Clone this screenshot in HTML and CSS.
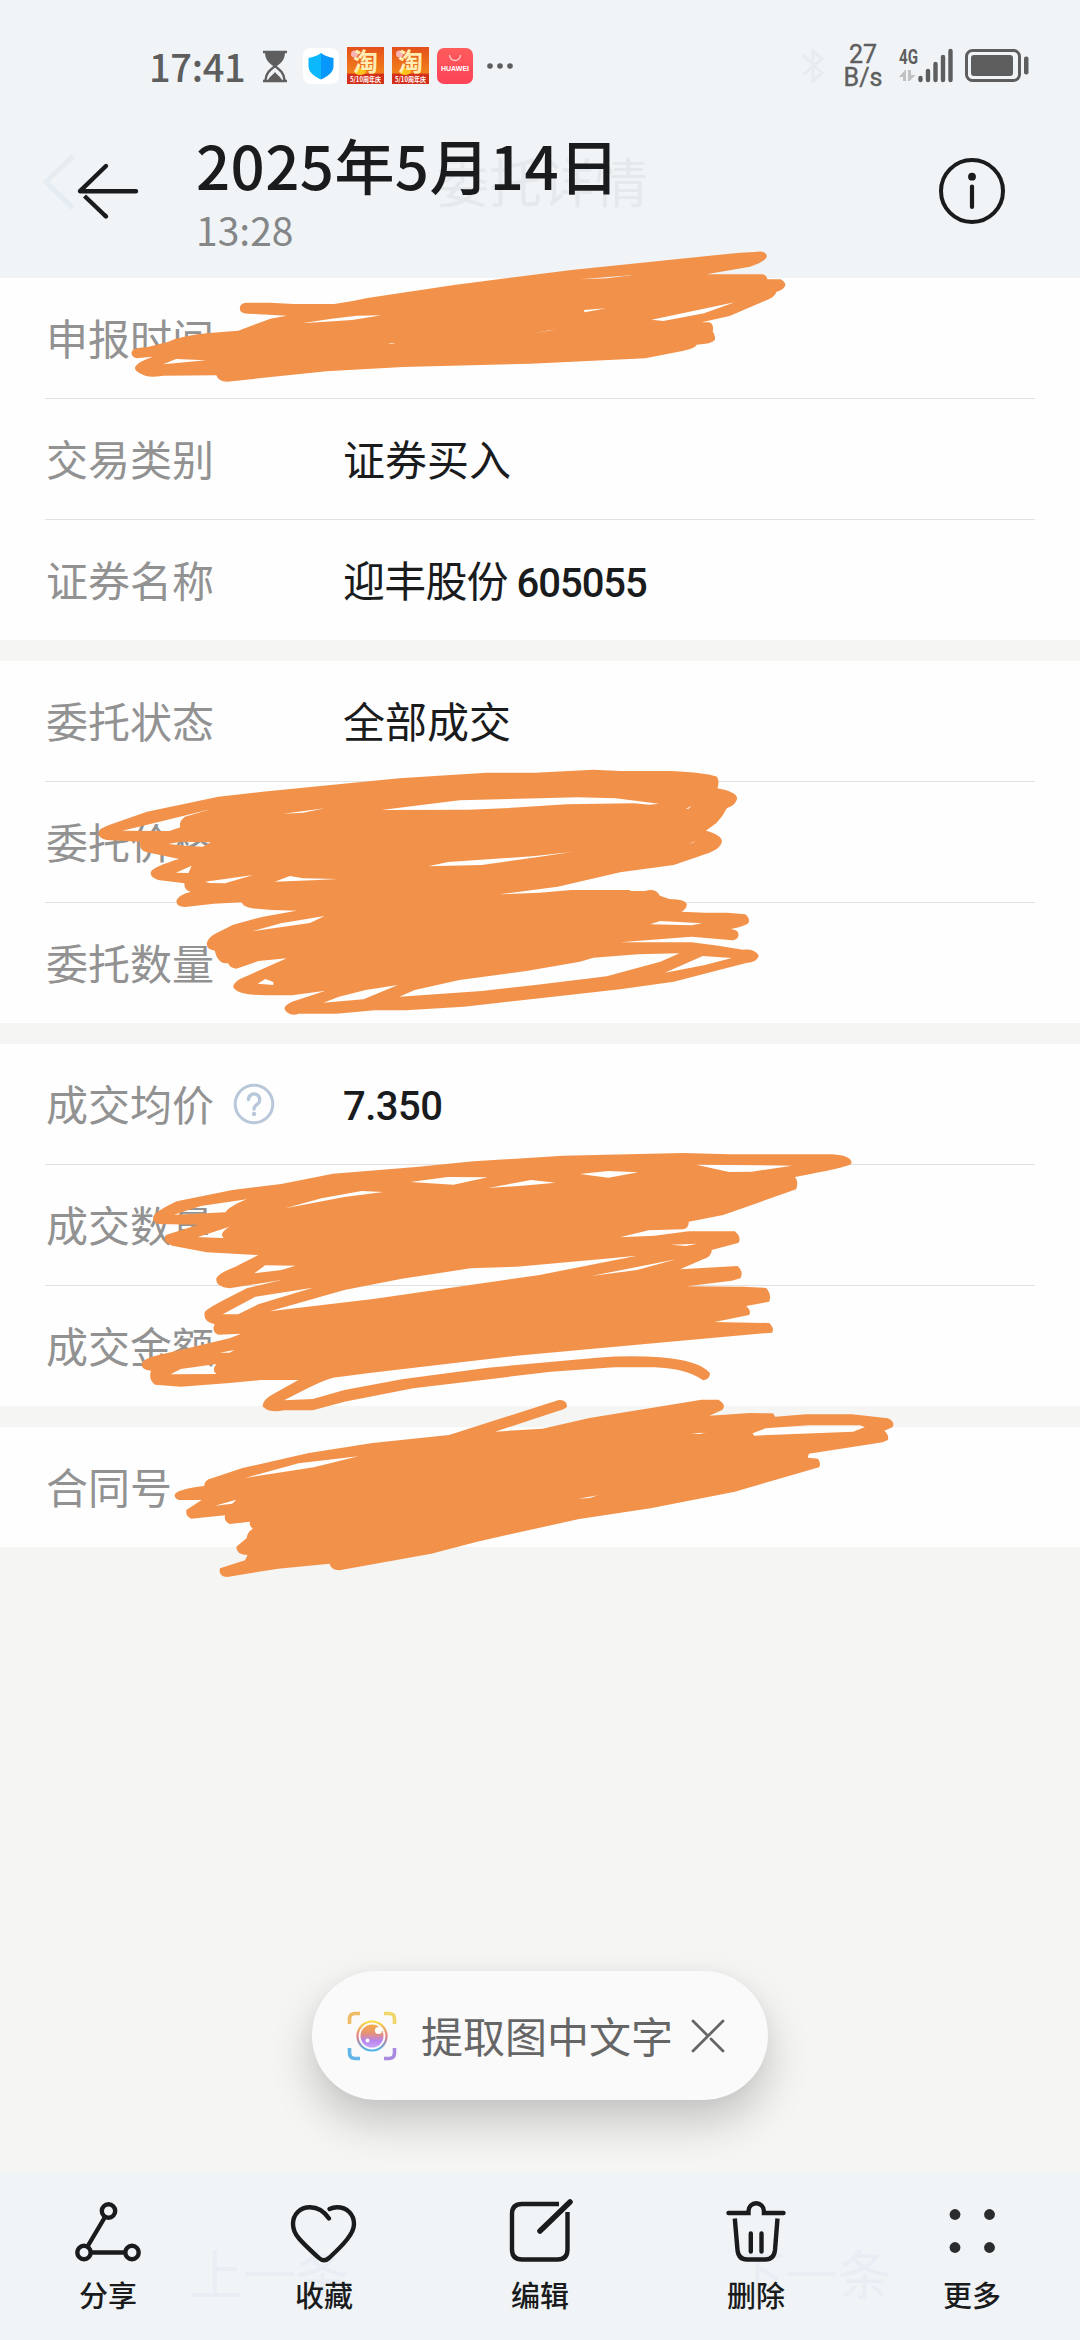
FILE: index.html
```html
<!DOCTYPE html>
<html lang="zh-CN">
<head>
    <meta charset="UTF-8">
    <meta name="viewport" content="width=device-width, initial-scale=1.0">
    <title>2025年5月14日</title>
    <link rel="stylesheet" href="styles.css">
</head>
<body>
    <div class="header">
        <div class="status-bar">
            <span class="clock">17:41</span>
            <svg class="hourglass" width="26" height="34" viewBox="0 0 26 34">
                <path d="M1 3h24M1 32h24" stroke="#5e5e5e" stroke-width="2.6"/>
                <path d="M3 3h20c0 8-4 11-9 14.500h-2C7 14 3 11 3 3z" fill="#5e5e5e"/>
                <path d="M13 17c-5 4-9 7-9.500 14M13 17c5 4 9 7 9.500 14" fill="none" stroke="#5e5e5e" stroke-width="2.400"/>
                <path d="M6 31c2-4 5-5 7-8 2 3 5 4 7 8z" fill="#5e5e5e"/>
            </svg>
            <svg class="app" width="36" height="36" viewBox="0 0 36 36">
                <defs>
                    <linearGradient id="shield"><stop offset=".5" stop-color="#0cb8fc"/><stop offset=".5" stop-color="#0898fb"/></linearGradient>
                    <linearGradient id="sale" x2="0" y2="1"><stop stop-color="#e4501a"/><stop offset=".7" stop-color="#f2801c"/><stop offset=".74" stop-color="#d3301c"/></linearGradient>
                </defs>
                <rect width="36" height="36" rx="8" fill="#fff"/>
                <path d="M18 5c4 3 8 4 12.500 5v8c0 6-5 10-12.500 13.500C10.500 28 5.500 24 5.500 18v-8C10 9 14 8 18 5z" fill="url(#shield)"/>
            </svg>
            <svg class="app taobao" width="37" height="37" viewBox="0 0 37 37">
                <rect width="37" height="37" fill="url(#sale)"/>
                <circle cx="7.500" cy="7" r="3.500" fill="#f7b4b4"/>
                <ellipse cx="13" cy="24.500" rx="6" ry="3.500" fill="#ffc21a"/>
                <text x="6" y="24" class="taobao-name" textLength="25" lengthAdjust="spacingAndGlyphs">淘</text>
                <text x="3" y="35" class="taobao-tag" textLength="31" lengthAdjust="spacingAndGlyphs">5/10周年庆</text>
            </svg>
            <svg class="app taobao" width="37" height="37" viewBox="0 0 37 37">
                <rect width="37" height="37" fill="url(#sale)"/>
                <circle cx="7.500" cy="7" r="3.500" fill="#f7b4b4"/>
                <ellipse cx="13" cy="24.500" rx="6" ry="3.500" fill="#ffc21a"/>
                <text x="6" y="24" class="taobao-name" textLength="25" lengthAdjust="spacingAndGlyphs">淘</text>
                <text x="3" y="35" class="taobao-tag" textLength="31" lengthAdjust="spacingAndGlyphs">5/10周年庆</text>
            </svg>
            <div class="app huawei">
                <svg width="14" height="8" viewBox="0 0 14 8"><path d="M1.500 1a5.500 5.500 0 0 0 11 0" fill="none" stroke="#ffc4c4" stroke-width="1.400"/></svg>
                <span>HUAWEI</span>
            </div>
            <svg class="dots" width="28" height="8" viewBox="0 0 28 8" fill="#5e5e5e">
                <circle cx="4" cy="4" r="2.800"/><circle cx="14" cy="4" r="2.800"/><circle cx="24" cy="4" r="2.800"/>
            </svg>
            <svg class="bluetooth" width="24" height="36" viewBox="0 0 24 36">
                <path d="M2 7l19 18-9 8V3l9 8L2 27" fill="none" stroke="#e8ecef" stroke-width="3"/>
            </svg>
            <div class="speed"><span>27</span><span>B/s</span></div>
            <svg class="signal" width="54" height="36" viewBox="0 0 54 36">
                <text x="0" y="16" class="network" textLength="19" lengthAdjust="spacingAndGlyphs">4G</text>
                <path d="M0 29l6-7h1v11H4v-4zM16.500 27l-6 6H9V22h3v5z" fill="#bfc1c3"/>
                <path d="M21.500 30v2M29 23v9M36.500 16v16M44 9v23M51.500 3v29" stroke="#5e5e5e" stroke-width="4.400" stroke-linecap="round"/>
            </svg>
            <svg class="battery" width="64" height="36" viewBox="0 0 64 36">
                <rect x="1.500" y="2.500" width="53" height="30" rx="6" fill="none" stroke="#5e5e5e" stroke-width="3"/>
                <rect x="6" y="7" width="42" height="21" rx="3" fill="#5e5e5e"/>
                <rect x="59" y="8.500" width="4.500" height="18" rx="2" fill="#5e5e5e"/>
            </svg>
        </div>
        <svg class="ghost ghost-back" width="34" height="58" viewBox="0 0 34 58"><path d="M30 3L3 29l27 26" fill="none" stroke="#e6edf2" stroke-width="5"/></svg>
        <div class="ghost ghost-title">委托详情</div>
        <div class="title-bar">
            <svg width="64" height="58" viewBox="0 0 64 58" fill="none" stroke="#1a1b1c" stroke-width="4.400" stroke-linecap="round" stroke-linejoin="round">
                <path d="M30 4L4 29.200h56"/>
                <path d="M8.500 34L30 54.500" stroke-linecap="butt"/>
                <path d="M29 53.500l1 1"/>
            </svg>
            <div class="title-text">
                <h1>2025年5月14日</h1>
                <p>13:28</p>
            </div>
            <svg width="68" height="68" viewBox="0 0 68 68">
                <circle cx="34" cy="34" r="31" fill="none" stroke="#1a1b1c" stroke-width="4"/>
                <circle cx="34" cy="19.700" r="3.900" fill="#1a1b1c"/>
                <path d="M34 29.500v20.500" stroke="#1a1b1c" stroke-width="4.200" stroke-linecap="round"/>
            </svg>
        </div>
    </div>

    <div class="details">
        <div class="group">
            <div class="row"><span class="label">申报时间</span></div>
            <div class="row"><span class="label">交易类别</span><span class="value">证券买入</span></div>
            <div class="row"><span class="label">证券名称</span><span class="value stock">迎丰股份 <span class="num">605055</span></span></div>
        </div>
        <div class="group">
            <div class="row"><span class="label">委托状态</span><span class="value">全部成交</span></div>
            <div class="row"><span class="label">委托价格</span></div>
            <div class="row"><span class="label">委托数量</span></div>
        </div>
        <div class="group">
            <div class="row">
                <span class="label">成交均价
                    <svg class="help" width="42" height="42" viewBox="0 0 42 42" fill="none" stroke="#b8c7da">
                        <circle cx="21" cy="21" r="18.800" stroke-width="3"/>
                        <path d="M15.500 16.500a5.600 5.600 0 1 1 9 4.500c-2.300 1.700-3.500 2.500-3.500 5" stroke-width="3.400" stroke-linecap="round"/>
                        <circle cx="21" cy="31" r="2.200" fill="#b8c7da" stroke="none"/>
                    </svg>
                </span>
                <span class="value num">7.350</span>
            </div>
            <div class="row"><span class="label">成交数量</span></div>
            <div class="row"><span class="label">成交金额</span></div>
        </div>
        <div class="group">
            <div class="row"><span class="label">合同号</span></div>
        </div>
    </div>

    <!-- marker strokes over the private fields -->
    <svg class="marker marker-time" viewBox="0 0 1568 1200" preserveAspectRatio="none">
        <path d="M470 205Q470 188 485 188L530 188 575 192H655Q690 185 720 174L890 135 1120 90 1450 38 1480 36Q1503 30 1503 50 1500 65 1470 80L1385 103H1495Q1503 106 1504 118H1530Q1540 125 1539 138 1535 150 1522 155 1520 170 1500 182L1430 228 1375 247H1390Q1400 252 1397 275 1403 285 1401 300 1395 312 1365 314 1365 325 1330 335L1265 355 1040 371 790 381 640 394 445 425Q428 425 424 406L320 407Q290 415 278 403 262 392 265 380 270 365 300 350L268 355Q256 350 258 335 262 322 290 321L330 305Q360 285 410 279L467 272 530 236 562 227 485 221Q470 221 470 205Z
            M592 250L650 236 700 227 748 226 690 240ZM1277 239L1440 187 1380 220 1300 243ZM1138 118L1240 105 1190 115ZM1144 210L1188 205 1146 217ZM320 373L345 357 404 361ZM1040 281L1092 267 1070 274ZM760 310L775 310 768 312Z"/>
    </svg>
    <svg class="marker marker-order" viewBox="0 0 1568 900" preserveAspectRatio="none">
        <path d="M41 280Q41 265 70 253L150 215 310 170 420 154 715 115 910 98H1020L1150 89 1210 93H1325Q1400 98 1427 110 1433 125 1428 145 1470 155 1472 175 1470 195 1449 205 1440 230 1425 250L1402 272Q1438 285 1438 305 1435 325 1410 338L1330 375 1210 397 1070 440 940 463 1030 458 1100 450H1230L1235 453H1265Q1290 443 1299 467L1320 477Q1362 478 1359 497 1357 508 1347 515L1400 518H1450L1490 523Q1502 535 1497 550 1488 560 1458 567 1477 570 1475 587 1472 603 1455 600L1370 590 1210 607H1370L1430 617 1485 629Q1510 625 1520 645 1520 665 1490 670L1330 725 1210 748 1050 772 860 800 730 811H660L575 821H490Q475 830 462 815 450 800 475 785L550 752 475 766H415Q350 765 343 740 345 722 370 710L463 655 400 663 350 686Q335 685 332 670 308 672 302 632 280 628 285 605 290 590 305 580L343 554 410 530 485 512 430 510 385 505Q365 500 362 487L300 491 235 501Q215 500 216 482 220 465 248 455 232 450 234 430L175 420Q155 410 159 395 165 380 222 357L150 337Q130 330 135 305L60 300Q42 295 41 280Z
            M95 272L215 233 292 208 235 230Q220 245 225 262L200 273ZM198 312L225 305 293 307 275 320 240 318ZM215 398L250 377 243 399ZM280 425L388 405 325 430 290 429ZM436 425L470 408 500 415 578 417 520 421ZM675 210L850 181 1115 172 1200 175 1297 191 1275 194 1240 190 1090 193 950 205 870 209ZM780 379L825 366 1020 348 1105 335 1030 350 900 375ZM455 221L548 205 500 218ZM385 574L450 550 548 528 515 549ZM398 731L415 717 433 726V735ZM545 788L580 770 640 750 712 735 635 778ZM715 770L750 750 850 720 1000 693 1120 665 1150 653 1250 643 1343 640 1300 665 1180 709 1020 735 900 753ZM1310 698L1395 648 1460 654 1400 675ZM1277 553L1300 543 1393 550 1370 556ZM1357 206L1370 198 1363 206ZM1365 311L1380 303 1372 309Z"/>
    </svg>
    <svg class="marker marker-deal" viewBox="0 0 1568 1200" preserveAspectRatio="none">
        <path d="M267 590Q270 575 308 544L405 510 490 492 580 461 725 441 825 424 980 407 1190 399 1270 403H1450Q1487 408 1483 432 1475 442 1385 471 1392 485 1387 508L1260 585 1200 605Q1200 625 1190 628L1130 631 1080 652 1140 647 1200 634H1280Q1292 650 1287 668L1240 690Q1240 710 1225 718L1185 748 1285 738Q1296 755 1290 775L1275 782 1197 799 1295 800 1335 804Q1345 825 1340 845L1300 858Q1310 875 1305 885L1245 906 1340 909Q1350 925 1345 938L1220 957 900 1007 640 1060 580 1073Q560 1083 530 1110L495 1141 545 1137 600 1110 700 1078 850 1043 1040 1013Q1100 1005 1150 1012 1220 1022 1237 1060 1237 1078 1225 1081 1195 1045 1140 1042H1070L960 1055 720 1105 600 1145 545 1171H495Q470 1180 458 1160 455 1140 480 1118L520 1080H455L400 1089 315 1100 270 1094Q258 1078 263 1052 245 1050 247 1030 252 1012 290 1000L400 955 420 941 380 944Q368 935 374 913 352 905 357 875 362 865 390 840L430 805 490 780 400 805Q375 800 377 775 380 760 410 740L450 705 360 697 300 677Q282 665 289 645L345 614 275 612Q265 605 267 590Z
            M303 584L350 558 430 538Q398 560 393 577ZM344 652L400 620Q380 640 390 654ZM443 760L462 736 515 737 490 750ZM388 883L445 830 545 803 450 853 415 883ZM470 874L600 810 700 776 820 745 900 740 1050 717 1110 707 940 765 650 837ZM1030 768L1178 718 1110 750ZM1168 674L1215 671 1195 678ZM1213 434L1380 437 1310 455 1270 456ZM715 486L780 471 850 472 790 494ZM850 504L925 480 968 488 910 497ZM1010 462L1060 453 1112 457 1060 473ZM497 565L560 535 630 513 668 516 600 531ZM297 1063L315 1047 377 1032Q368 1050 377 1062ZM383 998L408 990 400 998Z"/>
    </svg>
    <svg class="marker marker-contract" viewBox="0 0 1568 660" preserveAspectRatio="none">
        <path d="M107 345Q110 328 165 318 165 300 180 295L240 264 370 219 495 189 645 165 860 60Q877 60 876 80 872 88 860 92L735 155 828 146 920 114 1140 59H1173Q1190 75 1180 90L1155 107 1235 99 1280 100 1284 110 1345 103H1435L1505 115Q1520 125 1514 142L1498 152Q1508 165 1505 180L1495 187 1350 221 1348 233 1368 236Q1375 250 1370 262L1205 335 1040 385 900 417 700 485 610 521 490 554 430 571Q412 568 411 551L310 566 210 591Q192 588 196 565L245 541 250 525Q228 525 228 500L248 475Q250 455 260 447 252 435 255 425L215 432Q203 422 206 406L140 416Q128 410 130 390L160 360H115Q107 355 107 345Z
            M245 294L350 250 467 229 380 262ZM186 377L228 359 220 371ZM1243 167L1240 160 1265 145 1350 136H1450L1460 141 1437 155ZM1120 160L1148 158 1135 162ZM898 356L937 346 920 354Z"/>
    </svg>

    <div class="extract">
        <svg width="50" height="50" viewBox="0 0 50 50" fill="none">
            <defs>
                <linearGradient id="ring" x2="0" y2="1"><stop stop-color="#f7dc3c"/><stop offset=".5" stop-color="#e77b86"/><stop offset="1" stop-color="#4bb4e6"/></linearGradient>
                <linearGradient id="lens" x2="0" y2="1"><stop stop-color="#f5ac45"/><stop offset=".4" stop-color="#e59079"/><stop offset=".7" stop-color="#b884ee"/><stop offset="1" stop-color="#c9a4f7"/></linearGradient>
            </defs>
            <path d="M2.500 13V8q0-5.500 5.500-5.500h5" stroke="#eebb67" stroke-width="3.600"/>
            <path d="M37 2.500h5q5.500 0 5.500 5.500v5" stroke="#efd76c" stroke-width="3.600"/>
            <path d="M2.500 37v5q0 5.500 5.500 5.500h5" stroke="#62b5e6" stroke-width="3.600"/>
            <path d="M37 47.500h5q5.500 0 5.500-5.500v-5" stroke="#a98ae0" stroke-width="3.600"/>
            <circle cx="25" cy="25" r="14.500" stroke="url(#ring)" stroke-width="2.200"/>
            <circle cx="25" cy="25" r="11.500" fill="url(#lens)"/>
            <circle cx="31.500" cy="19.500" r="3.600" fill="#fff"/>
            <circle cx="20.500" cy="29.500" r="2" fill="#fff"/>
        </svg>
        <span>提取图中文字</span>
        <svg width="34" height="34" viewBox="0 0 34 34" stroke="#666" stroke-width="2.800" stroke-linecap="round">
            <path d="M32 2L2 32M2 2l15 15M20 20l12 12"/>
        </svg>
    </div>

    <div class="toolbar">
        <div class="ghost ghost-prev">上一条</div>
        <div class="ghost ghost-next">下一条</div>
        <div class="tool">
            <svg width="72" height="72" viewBox="0 0 72 72">
                <circle cx="36.500" cy="13" r="6.700"/><circle cx="12" cy="54.500" r="6.700"/><circle cx="60" cy="54.500" r="6.700"/>
                <path d="M33 19L15.500 48.500M19 54.500h34"/>
            </svg>
            <span>分享</span>
        </div>
        <div class="tool">
            <svg width="72" height="72" viewBox="0 0 72 72">
                <path d="M41 20.500C36 13 30 9.200 22 9.200 12 9.200 5 16.500 5 26c0 6 2.500 10.500 6 14.500 6 7 13 13 20 19.500q5 4.500 10 0c7-6.500 12-11 18-18.500 4-5 7-9.500 7-15.500 0-9.500-7-16.800-17-16.800q-4 0-7.500 1.800"/>
            </svg>
            <span>收藏</span>
        </div>
        <div class="tool">
            <svg width="72" height="72" viewBox="0 0 72 72">
                <path d="M55 6H18Q8 6 8 16V51.500Q8 61.500 18 61.500H53.500Q63.500 61.500 63.500 51.500V14" stroke-linecap="butt"/>
                <path d="M66 4L36 33" stroke-width="5.500"/>
            </svg>
            <span>编辑</span>
        </div>
        <div class="tool">
            <svg width="72" height="72" viewBox="0 0 72 72">
                <path d="M8.500 15H28.500v-2a7.700 7.700 0 0 1 15.400 0v2H63.500M30.800 35.500V53.500M41.500 35.500V53.500"/>
                <path d="M14.800 20.500L17.500 52Q18.500 61.500 27 61.500H45.500Q54 61.500 55 52L57.500 20.500" stroke-linecap="butt"/>
            </svg>
            <span>删除</span>
        </div>
        <div class="tool">
            <svg class="more" width="72" height="72" viewBox="0 0 72 72">
                <circle cx="19" cy="16.500" r="5.400"/><circle cx="53.500" cy="16.500" r="5.400"/><circle cx="19" cy="49.500" r="5.400"/><circle cx="53.500" cy="49.500" r="5.400"/>
            </svg>
            <span>更多</span>
        </div>
    </div>
</body>
</html>
```

FILE: styles.css
```css
* {
    box-sizing: border-box;
    font-family: "Noto Sans CJK SC", "Noto Sans", sans-serif;
}

body {
    position: relative;
    margin: 0;
    width: 1080px;
    height: 2340px;
    overflow: hidden;
    background-color: #f5f5f4;
    color: #1a1b1c;
    display: flex;
    flex-direction: column;
}

svg {
    flex-shrink: 0;
    display: block;
    overflow: visible;
}

.header {
    position: relative;
    height: 278px;
    background-color: #f0f4f7;
}

.status-bar {
    display: flex;
    align-items: center;
    height: 132px;
    padding: 0 52px 0 149px;
    color: #5e5e5e;
}

.clock {
    width: 113px;
    font-size: 38px;
    font-weight: 500;
    line-height: 40px;
    letter-spacing: -0.3px;
}

.app {
    flex-shrink: 0;
    width: 36px;
    height: 36px;
    margin-left: 9px;
}

.hourglass {
    margin-right: 6px;
}

.taobao {
    width: 37px;
    height: 37px;
    margin-left: 8px;
    margin-top: -1px;
}

.taobao-name {
    font-size: 25px;
    font-weight: 700;
    fill: #ffedb4;
}

.taobao-tag {
    font-size: 7px;
    font-weight: 700;
    fill: #fff;
}

.huawei {
    margin-left: 8px;
    border-radius: 7px;
    background: linear-gradient(#ff5c5c, #fd4358);
    display: flex;
    flex-direction: column;
    align-items: center;
    padding-top: 6px;
}

.huawei span {
    color: #fff;
    font-family: "Liberation Sans", sans-serif;
    font-size: 7px;
    font-weight: 700;
    line-height: 13px;
}

.dots {
    margin-left: 13px;
}

.bluetooth {
    margin-left: auto;
}

.speed {
    display: flex;
    flex-direction: column;
    align-items: center;
    width: 38px;
    margin-left: 19px;
}

.speed span {
    font-family: Roboto, sans-serif;
    font-size: 25px;
    font-weight: 400;
    line-height: 23px;
    -webkit-text-stroke: 0.4px #5e5e5e;
}

.signal {
    margin-left: 17px;
}

.network {
    font-family: Roboto, sans-serif;
    font-size: 21px;
    font-weight: 700;
    fill: #5e5e5e;
}

.battery {
    margin-left: 12px;
    margin-right: -1px;
}

.title-bar {
    position: relative;
    display: flex;
    align-items: center;
    height: 118px;
    padding: 0 74px 0 76px;
}

.title-text {
    flex: 1;
    margin-left: 56px;
    padding-top: 6px;
}

.title-text h1 {
    margin: 0;
    font-size: 60px;
    font-weight: 500;
    line-height: 70px;
    letter-spacing: 0.4px;
    white-space: nowrap;
}

.title-text p {
    margin: 0;
    color: #858687;
    font-size: 39px;
    line-height: 60px;
}

/* faint content of the screen behind the bars */
.ghost {
    position: absolute;
    font-size: 53px;
    line-height: 60px;
    white-space: nowrap;
    color: #e5e9ec;
}

.ghost-back {
    left: 43px;
    top: 153px;
}

.ghost-title {
    left: 436px;
    top: 150px;
}

.ghost-prev {
    left: 190px;
    top: 70px;
    color: #e8eef4;
}

.ghost-next {
    left: 732px;
    top: 70px;
    color: #e8eef4;
}

.details {
    display: flex;
    flex-direction: column;
    gap: 21px;
}

.group {
    background-color: #fefefe;
    padding: 0 45px;
}

.row {
    display: flex;
    align-items: center;
    height: 120px;
    padding-bottom: 4px;
    font-size: 42px;
}

.row + .row {
    height: 121px;
    border-top: 1px solid #e2e2e2;
}

.label {
    display: flex;
    align-items: center;
    width: 298px;
    padding-left: 1px;
    color: #929292;
    white-space: nowrap;
}

.help {
    margin: 3px 0 0 19px;
}

.num {
    font-family: Roboto, sans-serif;
    font-size: 40px;
    font-weight: 500;
    letter-spacing: -1px;
}

.value.num {
    letter-spacing: -0.5px;
    padding-top: 8px;
}

.stock {
    letter-spacing: -0.8px;
}

.marker {
    position: absolute;
    fill: #f2924a;
    fill-rule: evenodd;
}

.marker-time {
    left: 0;
    top: 240px;
    width: 800px;
    height: 400px;
}

.marker-order {
    left: 80px;
    top: 740px;
    width: 700px;
    height: 300px;
}

.marker-deal {
    left: 0;
    top: 1020px;
    width: 900px;
    height: 400px;
}

.marker-contract {
    left: 120px;
    top: 1380px;
    width: 800px;
    height: 220px;
}

.extract {
    position: absolute;
    left: 312px;
    top: 1971px;
    width: 456px;
    height: 129px;
    padding: 0 43px 0 35px;
    border-radius: 65px;
    background-color: #fafafa;
    box-shadow: 0 22px 44px rgba(0, 0, 0, 0.2), 0 0 16px rgba(0, 0, 0, 0.03);
    display: flex;
    align-items: center;
    font-size: 42px;
    color: #666;
}

.extract span {
    flex: 1;
    margin: -3px 0 0 24px;
    white-space: nowrap;
}

.toolbar {
    position: relative;
    display: flex;
    height: 168px;
    margin-top: auto;
    background-color: #f0f4f7;
}

.tool {
    position: relative;
    flex: 1;
    display: flex;
    flex-direction: column;
    align-items: center;
    padding-top: 26px;
    font-size: 29px;
    font-weight: 500;
}

.tool span {
    line-height: 40px;
    margin-top: 4px;
}

.tool svg {
    fill: none;
    stroke: #1a1b1c;
    stroke-width: 4.4px;
    stroke-linecap: round;
}

.tool .more {
    fill: #2b2c2d;
    stroke: none;
}
```
